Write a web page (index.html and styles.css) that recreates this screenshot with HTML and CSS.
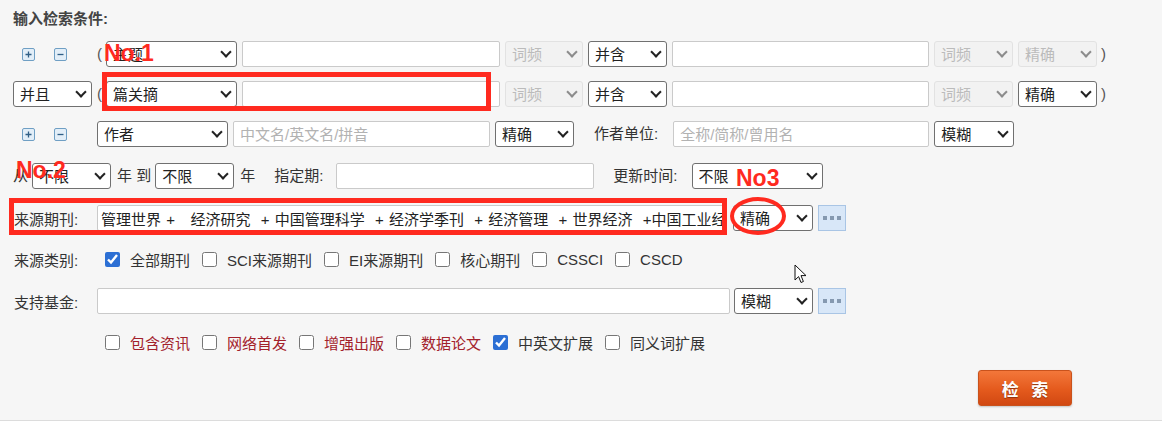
FILE: index.html
```html
<!DOCTYPE html>
<html lang="zh-CN">
<head>
<meta charset="utf-8">
<title>检索</title>
<link rel="stylesheet" href="styles.css">
</head>
<body>
<div class="page">
  <div class="title">输入检索条件:</div>

  <div class="row r1">
    <div class="lead">
      <svg class="ico" width="13" height="13" viewBox="0 0 13 13"><rect x="0.5" y="0.5" width="12" height="12" rx="1.5" fill="#e2eef8" stroke="#6f9fc4"/><path d="M3.5 6.5h6M6.5 3.5v6" stroke="#2f5f86" stroke-width="1.3"/></svg>
      <svg class="ico minus" width="13" height="13" viewBox="0 0 13 13"><rect x="0.5" y="0.5" width="12" height="12" rx="1.5" fill="#e2eef8" stroke="#6f9fc4"/><path d="M3.5 6.5h6" stroke="#2f5f86" stroke-width="1.3"/></svg>
    </div>
    <span class="paren">(</span>
    <span class="sel w131"><select><option>主题</option></select></span>
    <input class="txt w258 m5" type="text">
    <span class="sel dis w78 m5"><select disabled><option>词频</option></select></span>
    <span class="sel w79 m5"><select><option>并含</option></select></span>
    <input class="txt w257 m5" type="text">
    <span class="sel dis w79 m5"><select disabled><option>词频</option></select></span>
    <span class="sel dis w79 m5"><select disabled><option>精确</option></select></span>
    <span class="paren cl">)</span>
  </div>

  <div class="row r2">
    <span class="sel w79"><select><option>并且</option></select></span>
    <span class="paren m5">(</span>
    <span class="sel w131"><select><option>篇关摘</option></select></span>
    <input class="txt w258 m5" type="text">
    <span class="sel dis w78 m5"><select disabled><option>词频</option></select></span>
    <span class="sel w79 m5"><select><option>并含</option></select></span>
    <input class="txt w257 m5" type="text">
    <span class="sel dis w79 m5"><select disabled><option>词频</option></select></span>
    <span class="sel w79 m5"><select><option>精确</option></select></span>
    <span class="paren cl">)</span>
  </div>

  <div class="row r3">
    <div class="lead">
      <svg class="ico" width="13" height="13" viewBox="0 0 13 13"><rect x="0.5" y="0.5" width="12" height="12" rx="1.5" fill="#e2eef8" stroke="#6f9fc4"/><path d="M3.5 6.5h6M6.5 3.5v6" stroke="#2f5f86" stroke-width="1.3"/></svg>
      <svg class="ico minus" width="13" height="13" viewBox="0 0 13 13"><rect x="0.5" y="0.5" width="12" height="12" rx="1.5" fill="#e2eef8" stroke="#6f9fc4"/><path d="M3.5 6.5h6" stroke="#2f5f86" stroke-width="1.3"/></svg>
    </div>
    <span class="sel w131"><select><option>作者</option></select></span>
    <input class="txt w257 m5" type="text" placeholder="中文名/英文名/拼音">
    <span class="sel w79 m5"><select><option>精确</option></select></span>
    <span class="inl unit">作者单位:</span>
    <input class="txt w256" type="text" placeholder="全称/简称/曾用名">
    <span class="sel w80 m5"><select><option>模糊</option></select></span>
  </div>

  <div class="row r4">
    <span class="inl from">从</span>
    <span class="sel w79"><select><option>不限</option></select></span>
    <span class="inl to">年 到</span>
    <span class="sel w79"><select><option>不限</option></select></span>
    <span class="inl year">年</span>
    <span class="inl period">指定期:</span>
    <input class="txt w258" type="text">
    <span class="inl upd">更新时间:</span>
    <span class="sel w131"><select><option>不限</option></select></span>
  </div>

  <div class="row r5">
    <span class="lab">来源期刊:</span>
    <input class="txt src w629" type="text" value="管理世界 +   经济研究  + 中国管理科学  + 经济学季刊  + 经济管理  + 世界经济  +中国工业经济">
    <span class="sel w80 m7"><select><option>精确</option></select></span>
    <span class="more"><i></i><i></i><i></i></span>
  </div>

  <div class="row r6">
    <span class="lab">来源类别:</span>
    <div class="checks">
      <input class="cb" type="checkbox" checked><span class="opt">全部期刊</span>
      <input class="cb" type="checkbox"><span class="opt">SCI来源期刊</span>
      <input class="cb" type="checkbox"><span class="opt">EI来源期刊</span>
      <input class="cb" type="checkbox"><span class="opt">核心期刊</span>
      <input class="cb" type="checkbox"><span class="opt">CSSCI</span>
      <input class="cb" type="checkbox"><span class="opt">CSCD</span>
    </div>
  </div>

  <div class="row r7">
    <span class="lab">支持基金:</span>
    <input class="txt w633" type="text">
    <span class="sel w79 m4"><select><option>模糊</option></select></span>
    <span class="more"><i></i><i></i><i></i></span>
  </div>

  <div class="row r8">
    <div class="checks solo">
      <input class="cb" type="checkbox"><span class="opt red">包含资讯</span>
      <input class="cb" type="checkbox"><span class="opt red">网络首发</span>
      <input class="cb" type="checkbox"><span class="opt red">增强出版</span>
      <input class="cb" type="checkbox"><span class="opt red">数据论文</span>
      <input class="cb" type="checkbox" checked><span class="opt">中英文扩展</span>
      <input class="cb" type="checkbox"><span class="opt">同义词扩展</span>
    </div>
  </div>

  <div class="row rbtn">
    <button class="search" type="button">检 索</button>
  </div>

  <div class="mark box1"></div>
  <div class="mark box2"></div>
  <div class="mark oval"></div>
  <span class="tag t1">No.1</span>
  <span class="tag t2">No.2</span>
  <span class="tag t3">No3</span>
  <svg class="cursor" width="14" height="21" viewBox="0 0 14 21"><path d="M1 1 L1 16 L4.6 12.6 L7 18.5 L9.4 17.5 L7 11.6 L12 11.6 Z" fill="#fff" stroke="#111" stroke-width="1" stroke-linejoin="round"/></svg>
</div>
</body>
</html>
```

FILE: styles.css
```css
* { box-sizing: border-box; }
html { background: #fff; }
body {
  margin: 0;
  font-family: "Liberation Sans", "Noto Sans CJK SC", sans-serif;
  font-size: 15px;
  color: #333;
}
.page {
  position: relative;
  height: 421px;
  background: #f6f6f6;
  border-bottom: 1px solid #dcdcdc;
  padding: 9px 0 0 13px;
}
.title {
  height: 20px;
  line-height: 20px;
  font-weight: bold;
  color: #444;
}
.row { display: flex; align-items: center; height: 26px; }
.r1 { margin-top: 12px; }
.r2, .r3 { margin-top: 14px; }
.r4, .r5 { margin-top: 16px; }
.r6 { margin-top: 15px; }
.r7 { margin-top: 16px; }
.r8 { margin-top: 15px; }
.rbtn { margin-top: 15px; height: 36px; justify-content: flex-end; padding-right: 90px; }

.lead { width: 84px; flex: none; display: flex; align-items: center; padding-left: 9px; }
.ico { display: block; }
.ico.minus { margin-left: 19px; }
.paren { width: 9px; flex: none; color: #555; line-height: 26px; }
.paren.cl { margin-left: 4px; }

.m4 { margin-left: 4px; }
.m5 { margin-left: 5px; }
.m7 { margin-left: 7px; }
.w78 { width: 78px; }
.w79 { width: 79px; }
.w80 { width: 80px; }
.w131 { width: 131px; }
.w256 { width: 256px; }
.w257 { width: 257px; }
.w258 { width: 258px; }
.w629 { width: 629px; }
.w633 { width: 633px; }

.sel { position: relative; display: block; height: 26px; flex: none; }
.sel select {
  -webkit-appearance: none;
  appearance: none;
  display: block;
  width: 100%;
  height: 26px;
  margin: 0;
  padding: 0 0 0 6px;
  border: 1px solid #707070;
  border-radius: 3px;
  background: #fff;
  font: inherit;
  font-size: 15px;
  color: #222;
}
.sel::after {
  content: "";
  position: absolute;
  right: 7px;
  top: 7px;
  width: 6px;
  height: 6px;
  border-right: 2px solid #222;
  border-bottom: 2px solid #222;
  transform: rotate(45deg);
  pointer-events: none;
}
.sel.dis select { background: #f1f1f1; border-color: #dadada; color: #a3a3a3; }
.sel.dis::after { border-color: #8c8c8c; }

.txt {
  flex: none;
  height: 26px;
  margin-top: 0;
  margin-bottom: 0;
  padding: 0 0 0 6px;
  border: 1px solid #cacaca;
  border-radius: 2px;
  background: #fff;
  font: inherit;
  color: #222;
}
.txt::placeholder { color: #b2b2b2; }
.txt.src { padding-left: 3px; word-spacing: 1px; }

.inl { flex: none; white-space: nowrap; line-height: 26px; color: #333; }
.unit { margin-left: 20px; margin-right: 15px; }
.from { width: 19px; }
.to { margin-left: 6px; margin-right: 4px; }
.year { margin-left: 6px; }
.period { margin-left: 19px; margin-right: 13px; }
.upd { margin-left: 19px; margin-right: 14px; }

.lab { width: 84px; flex: none; padding-left: 1px; white-space: nowrap; color: #333; }

.more {
  flex: none;
  width: 28px;
  height: 26px;
  margin-left: 5px;
  background: #d8e7f8;
  border: 1px solid #a9c5e5;
  display: flex;
  align-items: center;
  justify-content: center;
  gap: 3px;
}
.more i { display: block; width: 4px; height: 4px; background: #8599b0; }

.checks { display: flex; align-items: center; margin-left: 8px; }
.checks.solo { margin-left: 92px; }
.cb {
  flex: none;
  width: 15px;
  height: 15px;
  margin: 0 10px 0 0;
  accent-color: #2c6fd4;
}
.opt { margin-right: 12px; white-space: nowrap; color: #333; }
.opt.red { color: #a3212b; }

.search {
  width: 94px;
  height: 36px;
  padding: 0 0 0 4px;
  border: 1px solid #c9521c;
  border-radius: 3px;
  background: linear-gradient(#f3773a, #e45a1d 55%, #d14812);
  box-shadow: 0 1px 2px rgba(0,0,0,0.2);
  color: #fff;
  font: bold 17px "Liberation Sans", "Noto Sans CJK SC", sans-serif;
  letter-spacing: 4px;
  text-shadow: 0 1px 1px rgba(90,30,0,0.6);
}

.mark { position: absolute; border: 5px solid #ff2a1f; pointer-events: none; }
.box1 { left: 102px; top: 72px; width: 389px; height: 39px; }
.box2 { left: 9px; top: 198px; width: 718px; height: 37px; }
.oval { left: 730px; top: 197px; width: 56px; height: 38px; border-width: 4px; border-radius: 50%; }
.tag {
  position: absolute;
  font: bold 23px/23px "Liberation Sans", sans-serif;
  color: #ff2a1f;
  white-space: nowrap;
}
.t1 { left: 104px; top: 42px; }
.t2 { left: 16px; top: 159px; }
.t3 { left: 736px; top: 167px; }
.cursor { position: absolute; left: 794px; top: 264px; }
```
